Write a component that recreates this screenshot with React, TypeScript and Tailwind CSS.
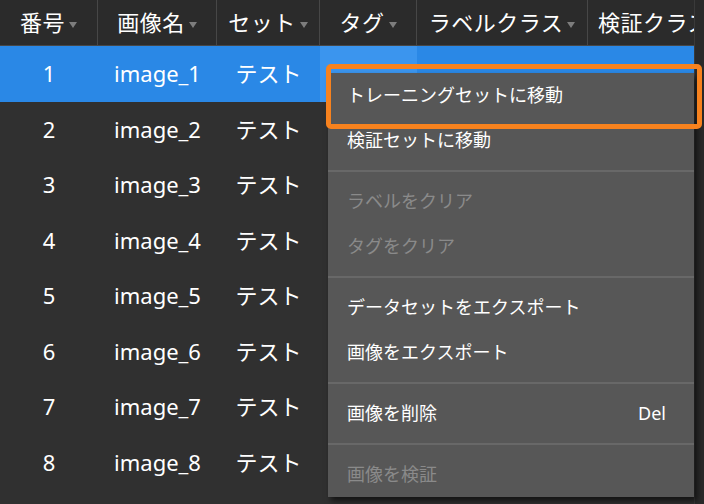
import React from 'react';

const columns = [
  { label: '番号', w: 'w-[98px]' },
  { label: '画像名', w: 'w-[119px]' },
  { label: 'セット', w: 'w-[103px]' },
  { label: 'タグ', w: 'w-[97px]' },
  { label: 'ラベルクラス', w: 'w-[171px]' },
];

const rows = [1, 2, 3, 4, 5, 6, 7, 8];

type MenuEntry = { label: string; disabled?: boolean; shortcut?: string } | 'sep';

const menu: MenuEntry[] = [
  { label: 'トレーニングセットに移動' },
  { label: '検証セットに移動' },
  'sep',
  { label: 'ラベルをクリア', disabled: true },
  { label: 'タグをクリア', disabled: true },
  'sep',
  { label: 'データセットをエクスポート' },
  { label: '画像をエクスポート' },
  'sep',
  { label: '画像を削除', shortcut: 'Del' },
  'sep',
  { label: '画像を検証', disabled: true },
];

const SortArrow = () => (
  <svg width="8" height="6" viewBox="0 0 8 6" className="ml-[4px] mt-[4px] shrink-0">
    <path d="M0 0 L8 0 L4 6 Z" fill="#7d7d7d" />
  </svg>
);

export default function App() {
  const font = { fontFamily: '"Noto Sans", "Noto Sans CJK JP", sans-serif' };

  return (
    <div className="relative w-[704px] h-[504px] overflow-hidden bg-[#303030] text-white" style={font}>
      <div className="flex h-full">
        <div className="w-[694px] shrink-0 flex flex-col">
          {/* header */}
          <div className="flex h-[46px] shrink-0 bg-[#2b2b2b] border-b border-[#474747]">
            {columns.map((c) => (
              <div key={c.label} className={`${c.w} shrink-0 flex items-center justify-center border-r border-[#474747] text-[22px] tracking-[0.5px]`}>
                <span>{c.label}</span>
                <SortArrow />
              </div>
            ))}
            <div className="flex-1 flex items-center pl-[10px] text-[22px] tracking-[0.5px] whitespace-nowrap overflow-hidden">
              <span>検証クラス</span>
              <SortArrow />
            </div>
          </div>
          {/* body */}
          {rows.map((n) => (
            <div key={n} className={`flex h-[55.5px] shrink-0 text-[22px] ${n === 1 ? 'bg-[#2a88e6]' : ''}`}>
              <div className="w-[98px] shrink-0 flex items-center justify-center">{n}</div>
              <div className="w-[119px] shrink-0 flex items-center justify-center">image_{n}</div>
              <div className="w-[103px] shrink-0 flex items-center justify-center">テスト</div>
              <div className={`w-[97px] shrink-0 ${n === 1 ? 'bg-[#3b95ee]' : ''}`} />
              <div className="flex-1" />
            </div>
          ))}
        </div>
        <div className="flex-1 bg-[#2a2a2a] border-l border-[#3a3a3a]" />
      </div>

      {/* context menu */}
      <div className="absolute left-[328px] top-[73px] w-[366px] bg-[#575757] shadow-[3px_4px_6px_rgba(0,0,0,0.6)] flex flex-col">
        {menu.map((m, i) =>
          m === 'sep' ? (
            <div key={i} className="h-[16px] flex items-center">
              <div className="w-full h-[2px] bg-[#686868]" />
            </div>
          ) : (
            <div
              key={i}
              className={`h-[45px] flex items-center justify-between pl-[19px] pr-[28px] text-[18px] ${m.disabled ? 'text-[#8a8a8a]' : 'text-white'}`}
            >
              <span>{m.label}</span>
              {m.shortcut && <span>{m.shortcut}</span>}
            </div>
          )
        )}
      </div>

      {/* highlight ring */}
      <div className="absolute left-[326px] top-[64px] w-[376px] h-[65px] border-[5px] border-[#f7821e] rounded-[5px]" />
    </div>
  );
}
